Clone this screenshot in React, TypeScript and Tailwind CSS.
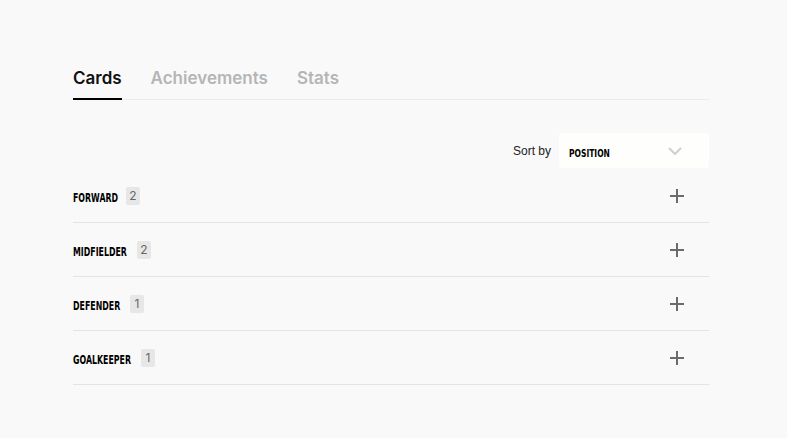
const groups = [
    { name: "FORWARD", count: 2, w: "w-[45px]" },
    { name: "MIDFIELDER", count: 2, w: "w-[56px]" },
    { name: "DEFENDER", count: 1, w: "w-[49px]" },
    { name: "GOALKEEPER", count: 1, w: "w-[60px]" },
];

const tabs = ["Cards", "Achievements", "Stats"];

export default function App() {
    return (
        <div className="min-h-[438px] bg-[#f9f9f9] font-['Inter',sans-serif]">
            <div className="w-[636px] pt-[64px] ml-[73px]">
                <div className="flex gap-[29px] border-b border-[#ececec]">
                    {tabs.map((tab, i) => (
                        <div
                            key={tab}
                            className={
                                i === 0
                                    ? "pb-[6px] text-[17px] font-semibold leading-[28px] text-[#111] border-b-2 border-black -mb-px"
                                    : "pb-[6px] text-[17px] font-semibold leading-[28px] text-[#b5b5b5]"
                            }
                        >
                            {tab}
                        </div>
                    ))}
                </div>

                <div className="mt-[33px] flex items-center justify-end gap-[8px]">
                    <span className="font-['Liberation_Sans',sans-serif] text-[12px] text-[#222]">Sort by</span>
                    <div className="flex h-[35px] w-[150px] items-center justify-between rounded-[3px] bg-[#fefefc] pl-[10px] pr-[27px]">
                        <span className="w-[40px] whitespace-nowrap">
                            <span className="inline-block origin-left scale-x-[0.8] font-['DejaVu_Sans',sans-serif] font-stretch-condensed text-[10.5px] font-bold text-black">
                                POSITION
                            </span>
                        </span>
                        <svg width="14" height="8" viewBox="0 0 14 8" fill="none" stroke="#cfcfcf" strokeWidth="2">
                            <path d="M1 1l6 6 6-6" />
                        </svg>
                    </div>
                </div>

                <div className="mt-px">
                    {groups.map((g) => (
                        <div
                            key={g.name}
                            className="flex h-[54px] items-center justify-between border-b border-[#e4e4e4]"
                        >
                            <div className="flex items-center gap-[8px]">
                                <span className={g.w + " whitespace-nowrap"}>
                                    <span className="inline-block origin-left scale-x-[0.76] font-['DejaVu_Sans',sans-serif] font-stretch-condensed text-[11.5px] font-bold text-black">
                                        {g.name}
                                    </span>
                                </span>
                                <span className="flex h-[18px] w-[14px] items-center justify-center rounded-[2px] bg-[#e7e7e7] text-[12px] text-[#666]">
                                    {g.count}
                                </span>
                            </div>
                            <svg className="mr-[25px]" width="14" height="14" viewBox="0 0 14 14" stroke="#6b6b6b" strokeWidth="2">
                                <path d="M7 0v14M0 7h14" />
                            </svg>
                        </div>
                    ))}
                </div>
            </div>
        </div>
    );
}
